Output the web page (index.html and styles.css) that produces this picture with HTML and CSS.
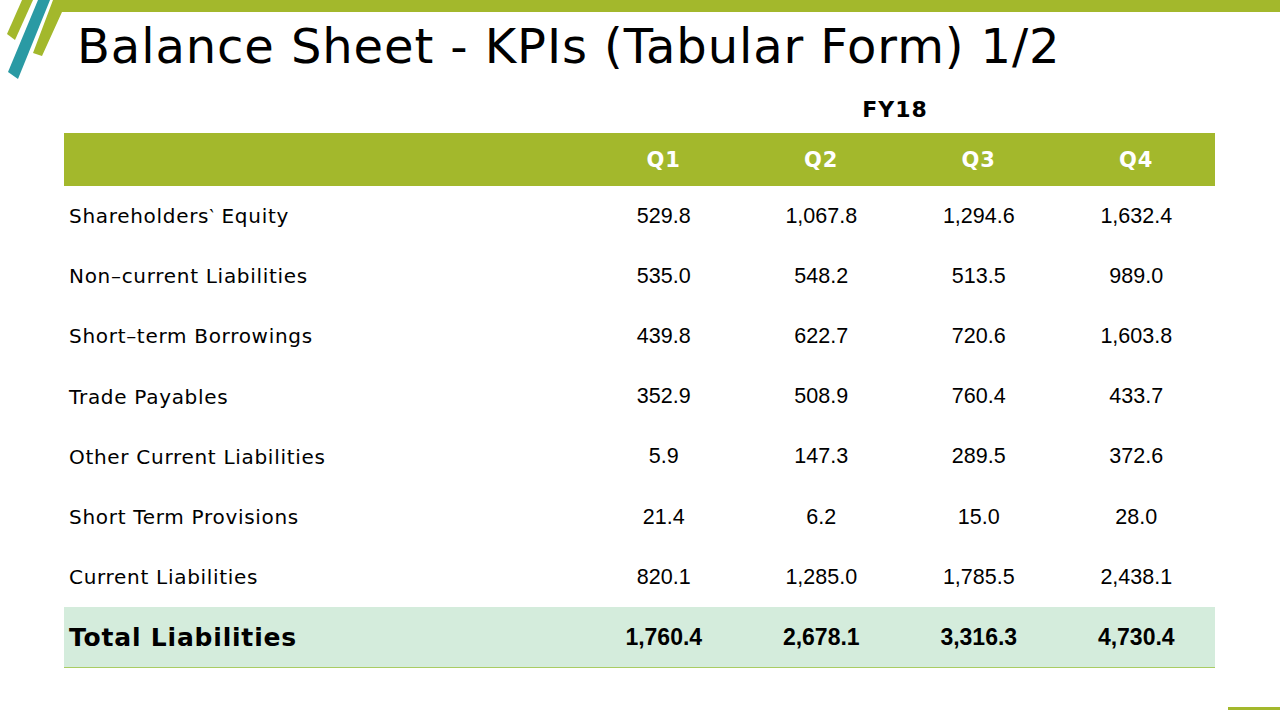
FILE: index.html
```html
<!DOCTYPE html>
<html lang="en">
<head>
<meta charset="utf-8">
<title>Balance Sheet - KPIs (Tabular Form) 1/2</title>
<link rel="stylesheet" href="styles.css">
</head>
<body>
<div class="slide">
  <svg class="deco" width="1280" height="80" viewBox="0 0 1280 80" aria-hidden="true">
    <polygon points="22,0 33,0 15,40 7,34" fill="#a3b82c"/>
    <polygon points="38,0 50,0 18,79 8,72" fill="#2a9aa4"/>
    <polygon points="53,0 1280,0 1280,12 62,12 42,56 33,53" fill="#a3b82c"/>
  </svg>
  <h1 class="title">Balance Sheet - KPIs (Tabular Form) 1/2</h1>
  <div class="fy-row"><span class="fy">FY18</span></div>
  <table class="kpi">
    <colgroup>
      <col class="c-label"><col class="c-num"><col class="c-num"><col class="c-num"><col class="c-num">
    </colgroup>
    <thead>
      <tr class="head"><th></th><th>Q1</th><th>Q2</th><th>Q3</th><th>Q4</th></tr>
    </thead>
    <tbody>
      <tr><td class="label">Shareholders‵ Equity</td><td>529.8</td><td>1,067.8</td><td>1,294.6</td><td>1,632.4</td></tr>
      <tr><td class="label">Non–current Liabilities</td><td>535.0</td><td>548.2</td><td>513.5</td><td>989.0</td></tr>
      <tr><td class="label">Short–term Borrowings</td><td>439.8</td><td>622.7</td><td>720.6</td><td>1,603.8</td></tr>
      <tr><td class="label">Trade Payables</td><td>352.9</td><td>508.9</td><td>760.4</td><td>433.7</td></tr>
      <tr><td class="label">Other Current Liabilities</td><td>5.9</td><td>147.3</td><td>289.5</td><td>372.6</td></tr>
      <tr><td class="label">Short Term Provisions</td><td>21.4</td><td>6.2</td><td>15.0</td><td>28.0</td></tr>
      <tr><td class="label">Current Liabilities</td><td>820.1</td><td>1,285.0</td><td>1,785.5</td><td>2,438.1</td></tr>
      <tr class="total"><td class="label">Total Liabilities</td><td>1,760.4</td><td>2,678.1</td><td>3,316.3</td><td>4,730.4</td></tr>
    </tbody>
  </table>
  <div class="foot"><span class="foot-line"></span></div>
</div>
</body>
</html>
```

FILE: styles.css
```css
* { box-sizing: border-box; }
html, body { margin: 0; padding: 0; background: #ffffff; }
.slide {
  position: relative;
  width: 1280px;
  height: 720px;
  overflow: hidden;
  background: #ffffff;
  color: #000000;
  font-family: "DejaVu Sans", Verdana, sans-serif;
}
.deco { position: absolute; left: 0; top: 0; display: block; }
.title {
  margin: 0;
  padding: 16px 0 0 77px;
  height: 86px;
  font-family: "DejaVu Sans", Verdana, sans-serif;
  font-weight: 400;
  font-size: 48px;
  line-height: 60px;
  letter-spacing: 0.9px;
  white-space: nowrap;
}
.fy-row {
  margin-left: 585px;
  width: 630px;
  height: 47px;
  display: flex;
  justify-content: center;
  align-items: center;
}
.fy { font-weight: 700; font-size: 22px; letter-spacing: 1px; position: relative; left: -5px; }
.kpi {
  margin-left: 64px;
  width: 1151px;
  border-collapse: collapse;
  table-layout: fixed;
}
.c-label { width: 521px; }
.c-num { width: 157.5px; }
.head th {
  background: #a3b82c;
  color: #ffffff;
  height: 53px;
  padding: 0;
  font-size: 21px;
  letter-spacing: 1px;
  font-weight: 700;
  text-align: center;
}
.kpi td {
  height: 60.2px;
  padding: 0;
  text-align: center;
  font-family: "Liberation Sans", Arial, sans-serif;
  font-size: 21.5px;
}
.kpi td.label {
  text-align: left;
  padding-left: 5px;
  font-family: "DejaVu Sans", Verdana, sans-serif;
  font-size: 20px;
  letter-spacing: 0.7px;
}
.kpi tr.total td {
  background: #d4ecdc;
  border-bottom: 1px solid #a9cc63;
  height: 60px;
  font-weight: 700;
  font-size: 23px;
}
.kpi tr.total td.label { font-size: 25px; letter-spacing: 0.8px; }
.foot {
  display: flex;
  justify-content: flex-end;
  padding-top: 39px;
}
.foot-line { display: block; width: 52px; height: 3px; background: #a3b82c; }
```
